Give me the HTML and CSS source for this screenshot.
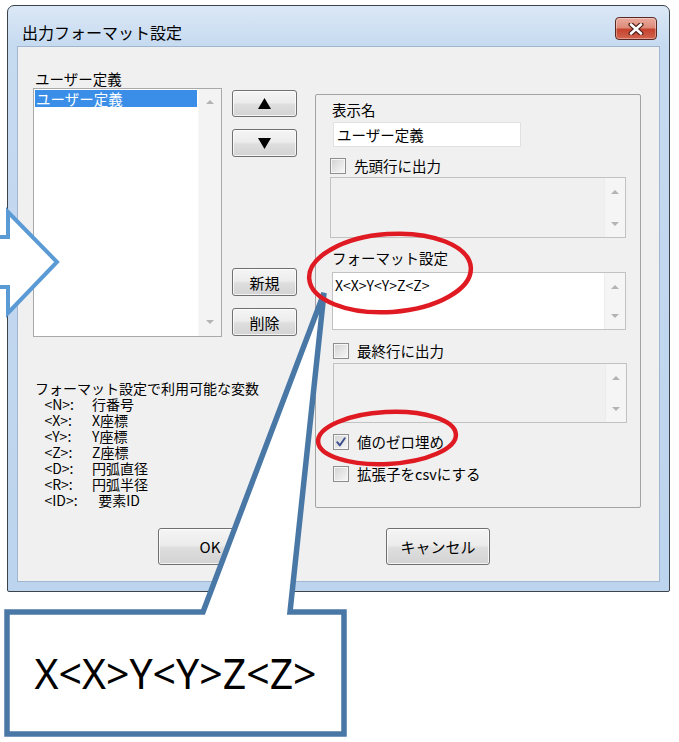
FILE: index.html
```html
<!DOCTYPE html>
<html lang="ja">
<head>
<meta charset="utf-8">
<title>出力フォーマット設定</title>
<link rel="stylesheet" href="styles.css">
</head>
<body>
<div class="page">
  <div class="window">
    <div class="titlebar">
      <span class="title">出力フォーマット設定</span>
      <button class="close" aria-label="閉じる">
        <svg width="16" height="12" viewBox="0 0 16 12"><path d="M3 1.5 L13 10.5 M13 1.5 L3 10.5" stroke="#4a1d17" stroke-width="5" stroke-linecap="round"/><path d="M3 1.5 L13 10.5 M13 1.5 L3 10.5" stroke="#ffffff" stroke-width="2.6" stroke-linecap="round"/></svg>
      </button>
    </div>
    <div class="client">
      <div class="top-row">
        <div class="left-col">
          <div class="label">ユーザー定義</div>
          <div class="listbox">
            <div class="list-items"><div class="item selected">ユーザー定義</div></div>
            <div class="vscroll"><span class="arr up"></span><span class="arr down"></span></div>
          </div>
<div class="vars">フォーマット設定で利用可能な変数
   &lt;N&gt;:	行番号
   &lt;X&gt;:	X座標
   &lt;Y&gt;:	Y座標
   &lt;Z&gt;:	Z座標
   &lt;D&gt;:	円弧直径
   &lt;R&gt;:	円弧半径
   &lt;ID&gt;:	  要素ID</div>
        </div>
        <div class="btn-col">
          <button class="btn arrow-btn"><svg width="13" height="11" viewBox="0 0 13 11"><polygon points="6.5,0 13,11 0,11" fill="#000"/></svg></button>
          <button class="btn arrow-btn down-btn"><svg width="13" height="11" viewBox="0 0 13 11"><polygon points="0,0 13,0 6.5,11" fill="#000"/></svg></button>
          <button class="btn text-btn new-btn">新規</button>
          <button class="btn text-btn del-btn">削除</button>
        </div>
        <div class="group">
          <div class="glabel">表示名</div>
          <div class="input">ユーザー定義</div>
          <div class="cb-row cb1"><span class="cb"></span><span>先頭行に出力</span></div>
          <div class="ta ta1 disabled"><div class="ta-text"></div><div class="ta-scroll"><span class="arr up"></span><span class="arr down"></span></div></div>
          <div class="glabel fmt-label">フォーマット設定</div>
          <div class="ta ta2"><div class="ta-text">X&lt;X&gt;Y&lt;Y&gt;Z&lt;Z&gt;</div><div class="ta-scroll"><span class="arr up"></span><span class="arr down"></span></div></div>
          <div class="cb-row cb2"><span class="cb"></span><span>最終行に出力</span></div>
          <div class="ta ta3 disabled"><div class="ta-text"></div><div class="ta-scroll"><span class="arr up"></span><span class="arr down"></span></div></div>
          <div class="cb-row cb3"><span class="cb checked"><svg width="12" height="12" viewBox="0 0 12 12"><path d="M2.2 6.2 L4.8 9.4 L9.8 2.2" fill="none" stroke="#3b4f8f" stroke-width="1.9" stroke-linejoin="round" stroke-linecap="round"/></svg></span><span>値のゼロ埋め</span></div>
          <div class="cb-row cb4"><span class="cb"></span><span>拡張子をcsvにする</span></div>
        </div>
      </div>
      <div class="bottom-row">
        <button class="btn big-btn">OK</button>
        <button class="btn big-btn">キャンセル</button>
      </div>
    </div>
  </div>

  <svg class="annot" width="679" height="742" viewBox="0 0 679 742">
    <polygon points="-10,237 8,237 8,212 57,262 8,313 8,287 -10,287" fill="#ffffff" stroke="#5b9bd5" stroke-width="4" stroke-linejoin="miter"/>
    <path d="M7 612 L203 612 L324 293 L290 612 L344 612 L344 734 L7 734 Z" fill="#ffffff" stroke="#4a78a6" stroke-width="5.5" stroke-linejoin="miter"/>
    <ellipse cx="390" cy="273" rx="81" ry="39" transform="rotate(-4 390 273)" fill="none" stroke="#e01a22" stroke-width="4.5"/>
    <ellipse cx="387" cy="438" rx="69" ry="26" transform="rotate(-3 387 438)" fill="none" stroke="#e01a22" stroke-width="4.5"/>
  </svg>
  <div class="callout-text">X&lt;X&gt;Y&lt;Y&gt;Z&lt;Z&gt;</div>
</div>
</body>
</html>
```

FILE: styles.css
```css
* { box-sizing: border-box; }
html, body { margin: 0; padding: 0; background: #ffffff; }
body {
  width: 679px;
  height: 742px;
  overflow: hidden;
  font-family: "Noto Sans CJK JP", "Noto Sans", sans-serif;
  color: #000;
}
.page {
  position: relative;
  width: 679px;
  height: 742px;
  padding: 5px 0 0 7px;
}
.window {
  width: 663px;
  height: 587px;
  border: 1px solid #3d434b;
  border-radius: 7px 7px 2px 2px;
  background: linear-gradient(#dbe8f6, #c6daf0 40px, #bdd4ee);
  padding: 0 9px 9px;
  display: flex;
  flex-direction: column;
}
.titlebar {
  height: 40px;
  flex: none;
  display: flex;
  align-items: flex-start;
  padding: 0 3px 0 5px;
}
.title {
  margin-top: 15px;
  font-size: 16px;
  line-height: 22px;
  white-space: nowrap;
}
.close {
  margin-left: auto;
  margin-top: 11px;
  width: 42px;
  height: 23px;
  padding: 0;
  border: 1px solid #5a2822;
  border-radius: 4px;
  background: linear-gradient(#eaaa9d 0%, #de8c7a 45%, #c5432e 55%, #d2654f 100%);
  box-shadow: inset 0 0 0 1px rgba(255, 255, 255, 0.35);
  display: flex;
  align-items: center;
  justify-content: center;
}
.client {
  flex: 1;
  background: #f0f0f0;
  border: 1px solid #a0b6d1;
  padding: 23px 15px 0 15px;
  font-size: 14.5px;
}
.top-row {
  display: flex;
  align-items: flex-start;
}
.left-col {
  width: 189px;
  flex: none;
}
.label {
  height: 18px;
  line-height: 18px;
  padding-left: 2px;
  white-space: nowrap;
}
.listbox {
  height: 249px;
  border: 1px solid #a9a9a9;
  background: #fff;
  display: flex;
}
.list-items {
  flex: 1;
  padding: 1px;
}
.item {
  height: 17px;
  line-height: 17px;
  padding-left: 1px;
  white-space: nowrap;
}
.item.selected {
  background: #3a8ee8;
  color: #fff;
}
.vscroll {
  width: 23px;
  background: #f3f3f3;
  border-left: 1px solid #f8f8f8;
  display: flex;
  flex-direction: column;
  justify-content: space-between;
  align-items: center;
  padding: 11px 0 12px;
}
.arr {
  display: block;
  width: 0;
  height: 0;
  border-left: 4px solid transparent;
  border-right: 4px solid transparent;
}
.arr.up { border-bottom: 4px solid #b3b3b3; }
.arr.down { border-top: 4px solid #b3b3b3; }
.vars {
  margin-top: 43px;
  padding-left: 2px;
  font-size: 14px;
  line-height: 16px;
  white-space: pre;
  tab-size: 57px;
}
.btn-col {
  margin-left: 10px;
  margin-top: 20px;
  width: 65px;
  flex: none;
  display: flex;
  flex-direction: column;
}
.btn {
  border: 1px solid #707070;
  border-radius: 3px;
  background: linear-gradient(#f5f5f5 0%, #ececec 46%, #dedede 54%, #d3d3d3 100%);
  box-shadow: inset 0 0 0 1px rgba(255, 255, 255, 0.75);
  font-family: inherit;
  font-size: 15px;
  color: #000;
  padding: 0;
  display: flex;
  align-items: center;
  justify-content: center;
}
.arrow-btn { height: 27px; }
.down-btn { margin-top: 12px; height: 28px; }
.text-btn { height: 28px; }
.new-btn { margin-top: 111px; }
.del-btn { margin-top: 12px; }
.group {
  margin-left: 18px;
  margin-top: 24px;
  width: 326px;
  height: 414px;
  flex: none;
  border: 1px solid #a3a3a3;
  border-radius: 2px;
  padding: 6px 0 0 14px;
}
.glabel {
  height: 18px;
  line-height: 18px;
  padding-left: 2px;
  white-space: nowrap;
}
.input {
  margin-top: 3px;
  margin-left: 3px;
  width: 188px;
  height: 25px;
  border: 1px solid #e1e1e1;
  background: #fff;
  padding-left: 3px;
  line-height: 23px;
  white-space: nowrap;
}
.cb-row {
  height: 18px;
  line-height: 18px;
  display: flex;
  align-items: center;
  gap: 8px;
  white-space: nowrap;
}
.cb {
  width: 16px;
  height: 16px;
  flex: none;
  border: 1px solid #8e8e8e;
  background: linear-gradient(135deg, #d2d2d2, #f8f8f8);
  box-shadow: inset 0 0 0 1px #f6f6f6;
  display: flex;
  align-items: center;
  justify-content: center;
}
.cb1 { margin-top: 10px; }
.cb2 { margin-top: 12px; margin-left: 3px; }
.cb3 { margin-top: 10px; margin-left: 3px; }
.cb4 { margin-top: 14px; margin-left: 3px; }
.ta {
  display: flex;
  border: 1px solid #c2c2c2;
  background: #fff;
}
.ta.disabled { background: #f0f0f0; }
.ta1 { margin-top: 2px; width: 296px; height: 61px; }
.fmt-label { margin-top: 11px; }
.ta2 { margin-top: 5px; margin-left: 2px; width: 294px; height: 58px; }
.ta3 { margin-top: 3px; margin-left: 3px; width: 294px; height: 60px; }
.ta-text {
  flex: 1;
  padding: 3px 0 0 2px;
  font-size: 14px;
  line-height: 18px;
  white-space: nowrap;
}
.ta-scroll {
  width: 21px;
  flex: none;
  background: #f5f5f5;
  border-left: 1px solid #ececec;
  display: flex;
  flex-direction: column;
  justify-content: space-between;
  align-items: center;
  padding: 12px 0 11px;
}
.bottom-row {
  margin-top: 20px;
  display: flex;
  gap: 124px;
  padding-left: 125px;
}
.big-btn {
  width: 104px;
  height: 37px;
}
.annot {
  position: absolute;
  left: 0;
  top: 0;
  overflow: visible;
  pointer-events: none;
}
.callout-text {
  position: absolute;
  left: 7px;
  top: 612px;
  width: 337px;
  height: 122px;
  display: flex;
  align-items: center;
  justify-content: center;
  font-family: "Noto Sans", "DejaVu Sans", sans-serif;
  font-size: 41px;
  line-height: 1;
  color: #000;
}
```
